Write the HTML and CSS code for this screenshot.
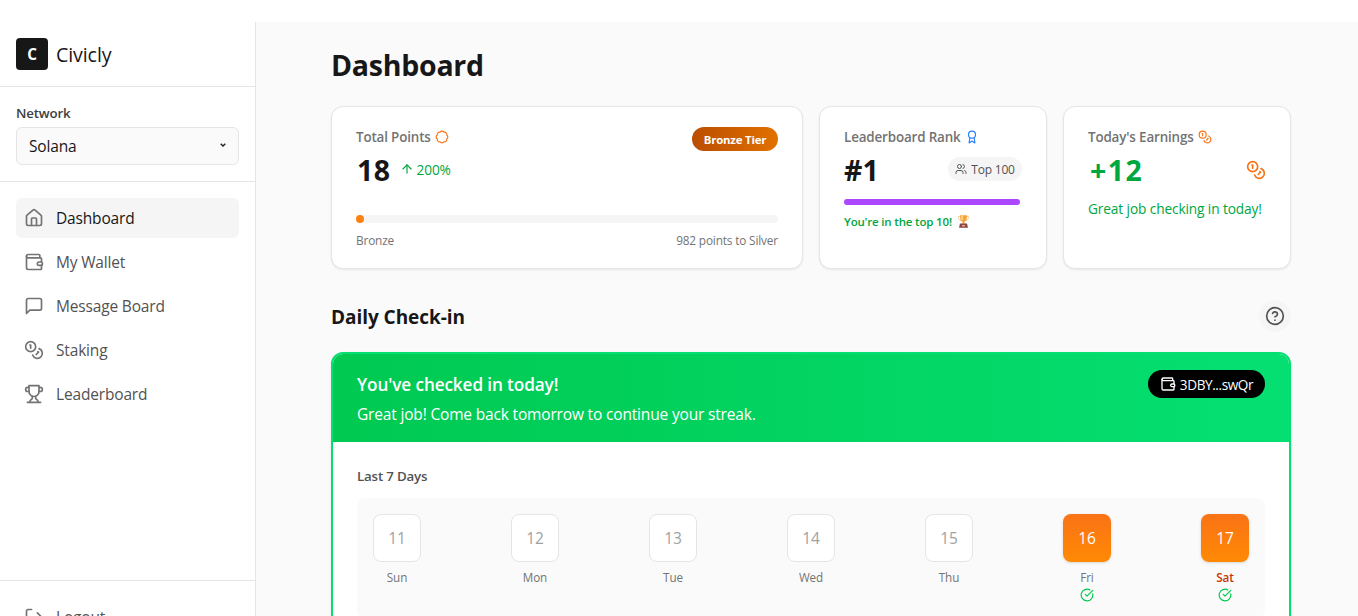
FILE: index.html
```
<!DOCTYPE html>
<html lang="en">
<head>
<meta charset="utf-8">
<title>Civicly</title>
<link rel="stylesheet" href="styles.css">
</head>
<body>
<svg class="defs" width="0" height="0">
  <symbol id="house" viewBox="0 0 24 24"><path d="M15 21v-8a1 1 0 0 0-1-1h-4a1 1 0 0 0-1 1v8"/><path d="M3 10a2 2 0 0 1 .709-1.528l7-5.999a2 2 0 0 1 2.582 0l7 5.999A2 2 0 0 1 21 10v9a2 2 0 0 1-2 2H5a2 2 0 0 1-2-2z"/></symbol>
  <symbol id="wallet" viewBox="0 0 24 24"><path d="M19 7V4a1 1 0 0 0-1-1H5a2 2 0 0 0 0 4h15a1 1 0 0 1 1 1v4h-3a2 2 0 0 0 0 4h3a1 1 0 0 0 1-1v-2a1 1 0 0 0-1-1"/><path d="M3 5v14a2 2 0 0 0 2 2h15a1 1 0 0 0 1-1v-4"/></symbol>
  <symbol id="message" viewBox="0 0 24 24"><path d="M21 15a2 2 0 0 1-2 2H7l-4 4V5a2 2 0 0 1 2-2h14a2 2 0 0 1 2 2z"/></symbol>
  <symbol id="coins" viewBox="0 0 24 24"><circle cx="8" cy="8" r="6"/><path d="M18.09 10.37A6 6 0 1 1 10.34 18"/><path d="M7 6h1v4"/><path d="m16.71 13.88.7.71-2.82 2.82"/></symbol>
  <symbol id="trophy" viewBox="0 0 24 24"><path d="M6 9H4.500a2.500 2.500 0 0 1 0-5H6"/><path d="M18 9h1.500a2.500 2.500 0 0 0 0-5H18"/><path d="M4 22h16"/><path d="M10 14.660V17c0 .55-.47.98-.97 1.210C7.850 18.750 7 20.240 7 22"/><path d="M14 14.660V17c0 .55.47.98.97 1.210C16.150 18.750 17 20.240 17 22"/><path d="M18 2H6v7a6 6 0 0 0 12 0V2Z"/></symbol>
  <symbol id="logout" viewBox="0 0 24 24"><path d="M9 21H5a2 2 0 0 1-2-2V5a2 2 0 0 1 2-2h4"/><path d="m16 17 5-5-5-5"/><path d="M21 12H9"/></symbol>
  <symbol id="badge" viewBox="0 0 24 24"><path d="M3.850 8.620a4 4 0 0 1 4.780-4.770 4 4 0 0 1 6.740 0 4 4 0 0 1 4.780 4.780 4 4 0 0 1 0 6.740 4 4 0 0 1-4.770 4.780 4 4 0 0 1-6.750 0 4 4 0 0 1-4.780-4.770 4 4 0 0 1 0-6.760Z"/></symbol>
  <symbol id="award" viewBox="0 0 24 24"><path d="m15.477 12.890 1.515 8.526a.5.5 0 0 1-.81.470l-3.580-2.687a1 1 0 0 0-1.197 0l-3.586 2.686a.5.5 0 0 1-.81-.469l1.514-8.526"/><circle cx="12" cy="8" r="6"/></symbol>
  <symbol id="arrow-up" viewBox="0 0 24 24"><path d="m5 12 7-7 7 7"/><path d="M12 19V5"/></symbol>
  <symbol id="users" viewBox="0 0 24 24"><path d="M16 21v-2a4 4 0 0 0-4-4H6a4 4 0 0 0-4 4v2"/><circle cx="9" cy="7" r="4"/><path d="M22 21v-2a4 4 0 0 0-3-3.870"/><path d="M16 3.130a4 4 0 0 1 0 7.750"/></symbol>
  <symbol id="help" viewBox="0 0 24 24"><circle cx="12" cy="12" r="10"/><path d="M9.090 9a3 3 0 0 1 5.830 1c0 2-3 3-3 3"/><path d="M12 17h.01"/></symbol>
  <symbol id="check" viewBox="0 0 24 24"><path d="M21.801 10A10 10 0 1 1 17 3.335"/><path d="m9 11 3 3L22 4"/></symbol>
</svg>
<div class="app">
  <aside class="sidebar">
    <div class="brand"><span class="logo">C</span><span class="brand-name">Civicly</span></div>
    <div class="network">
      <div class="network-label">Network</div>
      <div class="select"><span>Solana</span><svg class="chevron" viewBox="0 0 6 4"><path d="M.7.8 3 3 5.300.8"/></svg></div>
    </div>
    <nav class="nav">
      <a class="nav-item active"><svg class="icon i20"><use href="#house"/></svg><span>Dashboard</span></a>
      <a class="nav-item"><svg class="icon i20"><use href="#wallet"/></svg><span>My Wallet</span></a>
      <a class="nav-item"><svg class="icon i20"><use href="#message"/></svg><span>Message Board</span></a>
      <a class="nav-item"><svg class="icon i20"><use href="#coins"/></svg><span>Staking</span></a>
      <a class="nav-item"><svg class="icon i20"><use href="#trophy"/></svg><span>Leaderboard</span></a>
    </nav>
    <div class="sidebar-foot"><a class="nav-item"><svg class="icon i20"><use href="#logout"/></svg><span>Logout</span></a></div>
  </aside>
  <main class="main">
    <h1 class="title">Dashboard</h1>
    <section class="stats">
      <div class="card points">
        <div class="points-top">
          <div>
            <div class="label"><span>Total Points</span><svg class="icon i14 orange"><use href="#badge"/></svg></div>
            <div class="value-row"><span class="value total">18</span><span class="trend"><svg class="icon i14"><use href="#arrow-up"/></svg><span>200%</span></span></div>
          </div>
          <span class="tier"><span>Bronze Tier</span></span>
        </div>
        <div class="bar"><div class="bar-fill"></div></div>
        <div class="bar-labels"><span>Bronze</span><span>982 points to Silver</span></div>
      </div>
      <div class="card rank">
        <div class="label"><span>Leaderboard Rank</span><svg class="icon i14 blue"><use href="#award"/></svg></div>
        <div class="value-row spread"><span class="value">#1</span><span class="pill"><svg class="icon i12"><use href="#users"/></svg><span>Top 100</span></span></div>
        <div class="rank-bar"></div>
        <div class="rank-note"><span>You're in the top 10!</span>
          <svg class="cup" viewBox="0 0 13 13"><path d="M3 1.500H1.500v2L4 6m6-4.500h1.500v2L9 6" fill="none" stroke="#f8c48a" stroke-width=".8"/><path d="M2.800.3h7.400L9.500 5.200 7.500 7v2h-2V7l-2-1.800z" fill="#f6a33c"/><path d="M4 .5h2v5L4.200 4.500z" fill="#ffd27a"/><path d="M3 8.600h7l1 4.100H2z" fill="#8b4358"/><path d="M5 10h3v1.400H5z" fill="#efb65c"/></svg></div>
      </div>
      <div class="card">
        <div class="label"><span>Today's Earnings</span><svg class="icon i14 orange"><use href="#coins"/></svg></div>
        <div class="value-row spread"><span class="value plus">+12</span><svg class="icon i20 orange"><use href="#coins"/></svg></div>
        <div class="earn-note">Great job checking in today!</div>
      </div>
    </section>
    <div class="section-head"><h2>Daily Check-in</h2><span class="help"><svg class="icon i20"><use href="#help"/></svg></span></div>
    <section class="checkin">
      <div class="checkin-head">
        <div><h3>You've checked in today!</h3><p>Great job! Come back tomorrow to continue your streak.</p></div>
        <span class="address"><svg class="icon i16"><use href="#wallet"/></svg><span>3DBY...swQr</span></span>
      </div>
      <div class="checkin-body">
        <div class="last7">Last 7 Days</div>
        <div class="days">
          <div class="day"><span class="box">11</span><span class="dow">Sun</span></div>
          <div class="day"><span class="box">12</span><span class="dow">Mon</span></div>
          <div class="day"><span class="box">13</span><span class="dow">Tue</span></div>
          <div class="day"><span class="box">14</span><span class="dow">Wed</span></div>
          <div class="day"><span class="box">15</span><span class="dow">Thu</span></div>
          <div class="day done"><span class="box">16</span><span class="dow">Fri</span><svg class="icon i14"><use href="#check"/></svg></div>
          <div class="day done today"><span class="box">17</span><span class="dow">Sat</span><svg class="icon i14"><use href="#check"/></svg></div>
        </div>
      </div>
    </section>
  </main>
</div>
</body>
</html>
```
FILE: styles.css
```
* { box-sizing: border-box; margin: 0; padding: 0; }
body { font-family: "Open Sans", "Noto Sans", sans-serif; font-size: 15.5px; letter-spacing: -0.17px; color: #171717; background: #fff; height: 616px; overflow: hidden; }
.defs { display: block; position: absolute; }
.icon { fill: none; stroke: currentColor; stroke-width: 2; stroke-linecap: round; stroke-linejoin: round; flex: none; }
.i12 { width: 12px; height: 12px; }
.i14 { width: 14px; height: 14px; }
.i16 { width: 16px; height: 16px; }
.i20 { width: 20px; height: 20px; }
.orange { color: #f97316; }
.blue { color: #2b7fff; }
.app { display: flex; margin-top: 22px; height: 616px; white-space: nowrap; }

.sidebar { width: 256px; flex: none; border-right: 1px solid #e5e5e5; display: flex; flex-direction: column; }
.brand { height: 65px; padding: 0 16px; display: flex; align-items: center; gap: 8px; border-bottom: 1px solid #e5e5e5; }
.logo { width: 32px; height: 32px; border-radius: 4px; background: #171717; color: #fff; font-weight: 700; font-size: 15.2px; display: flex; align-items: center; justify-content: center; }
.brand-name { font-size: 19.6px; font-weight: 500; letter-spacing: -0.1px; }
.network { height: 95px; padding: 16px 16px 0; border-bottom: 1px solid #e5e5e5; }
.network-label { font-size: 13.3px; font-weight: 600; color: #404040; line-height: 20px; height: 24px; }
.select { height: 38px; border: 1px solid #e5e5e5; border-radius: 6px; background: #fafafa; display: flex; align-items: center; justify-content: space-between; padding: 0 12px; }
.chevron { width: 6px; height: 4px; fill: none; stroke: #262626; stroke-width: 1.5; margin-top: -3px; }
.nav { padding: 16px; display: flex; flex-direction: column; gap: 4px; flex: 1; }
.nav-item { height: 40px; display: flex; align-items: center; gap: 12px; padding: 0 8px; border-radius: 6px; color: #525252; }
.nav-item .icon { color: #737373; }
.active { background: #f5f5f5; color: #171717; }
.sidebar-foot { height: 58px; border-top: 1px solid #e5e5e5; padding: 16px; }

.main { flex: 1; background: #fafafa; padding: 24px 67px 0 75px; }
.title { font-size: 28.5px; letter-spacing: -0.25px; font-weight: 700; line-height: 36px; height: 60px; padding-top: 1px; }
.stats { display: grid; grid-template-columns: 472px 228px 228px; gap: 16px; height: 162px; }
.card { background: #fff; border: 1px solid #e5e5e5; border-radius: 12px; padding: 20px 24px; box-shadow: 0 1px 2px rgba(0,0,0,.08); }
.label { display: flex; align-items: center; gap: 4px; height: 20px; font-size: 13.4px; letter-spacing: -0.15px; font-weight: 550; color: #737373; }
.points-top { display: flex; justify-content: space-between; }
.value-row { display: flex; align-items: center; gap: 9px; height: 36px; margin-top: 5px; }
.spread { justify-content: space-between; }
.value { font-size: 28.5px; font-weight: 700; line-height: 36px; letter-spacing: 0; }
.total { padding-left: 1px; letter-spacing: .5px; }
.trend { display: flex; align-items: center; gap: 3px; color: #00a63e; font-size: 13.7px; height: 20px; margin-bottom: 2px; }
.tier { height: 24px; width: 86px; border-radius: 12px; background: linear-gradient(90deg, #bb4d00, #e17100); color: #fff; font-size: 11.4px; letter-spacing: -0.2px; font-weight: 700; display: flex; align-items: center; justify-content: center; }
.bar { height: 8px; margin-top: 27px; border-radius: 4px; background: #f5f5f5; }
.bar-fill { width: 8px; height: 8px; border-radius: 4px; background: #ff7f11; }
.bar-labels { display: flex; justify-content: space-between; font-size: 11.8px; letter-spacing: -0.15px; line-height: 16px; color: #737373; margin-top: 9px; }
.rank { padding-right: 26px; }
.pill { height: 24px; width: 74px; margin: 0 -2px 2px 0; border-radius: 12px; background: #f5f5f5; color: #525252; font-size: 12px; letter-spacing: -0.2px; display: flex; align-items: center; justify-content: center; gap: 4px; }
.rank-bar { height: 6px; border-radius: 3px; background: #ad46ff; margin-top: 11px; }
.rank-note { display: flex; align-items: center; gap: 5px; height: 16px; margin-top: 8px; font-size: 11.5px; font-weight: 600; color: #00a63e; }
.cup { width: 13px; height: 13px; }
.plus { color: #00a63e; letter-spacing: 1.5px; padding-left: 2px; }
.earn-note { font-size: 13.7px; letter-spacing: -0.12px; line-height: 20px; color: #00a63e; margin-top: 11px; }

.section-head { display: flex; align-items: center; justify-content: space-between; height: 32px; margin-top: 32px; }
.section-head h2 { font-size: 19px; letter-spacing: -0.05px; font-weight: 700; padding-top: 2px; }
.help { width: 32px; height: 32px; border-radius: 50%; background: #f5f5f5; color: #525252; display: flex; align-items: center; justify-content: center; }
.checkin { margin-top: 20px; height: 350px; border: 2px solid #05df72; border-radius: 12px; background: #fff; overflow: hidden; box-shadow: 0 1px 3px rgba(0,0,0,.1); }
.checkin-head { height: 88px; padding: 16px 24px; background: linear-gradient(90deg, #00c951, #05df72); color: #fff; display: flex; justify-content: space-between; align-items: flex-start; }
.checkin-head h3 { font-size: 17.2px; letter-spacing: -0.12px; font-weight: 600; line-height: 28px; padding-top: 1px; }
.checkin-head p { line-height: 24px; margin-top: 3px; }
.address { width: 117px; height: 28px; border-radius: 14px; background: #000; font-size: 13.6px; letter-spacing: -0.42px; display: flex; align-items: center; justify-content: center; gap: 4px; }
.checkin-body { padding: 24px; }
.last7 { font-size: 13.3px; font-weight: 600; line-height: 20px; color: #525252; }
.days { margin-top: 12px; height: 120px; padding: 16px; background: #fafafa; border-radius: 8px; display: flex; justify-content: space-between; }
.day { width: 48px; display: flex; flex-direction: column; align-items: center; }
.box { width: 48px; height: 48px; border: 1px solid #e5e5e5; border-radius: 8px; background: #fff; color: #a1a1a1; display: flex; align-items: center; justify-content: center; }
.dow { font-size: 11.7px; letter-spacing: -0.1px; line-height: 16px; margin-top: 7px; color: #737373; }
.day .icon { color: #00c950; margin-top: 3px; }
.done .box { border: 0; background: linear-gradient(180deg, #f97316, #ff8904); color: #fff; box-shadow: 0 1px 3px rgba(0,0,0,.15); }
.today .dow { color: #ca3500; font-weight: 600; }
```
